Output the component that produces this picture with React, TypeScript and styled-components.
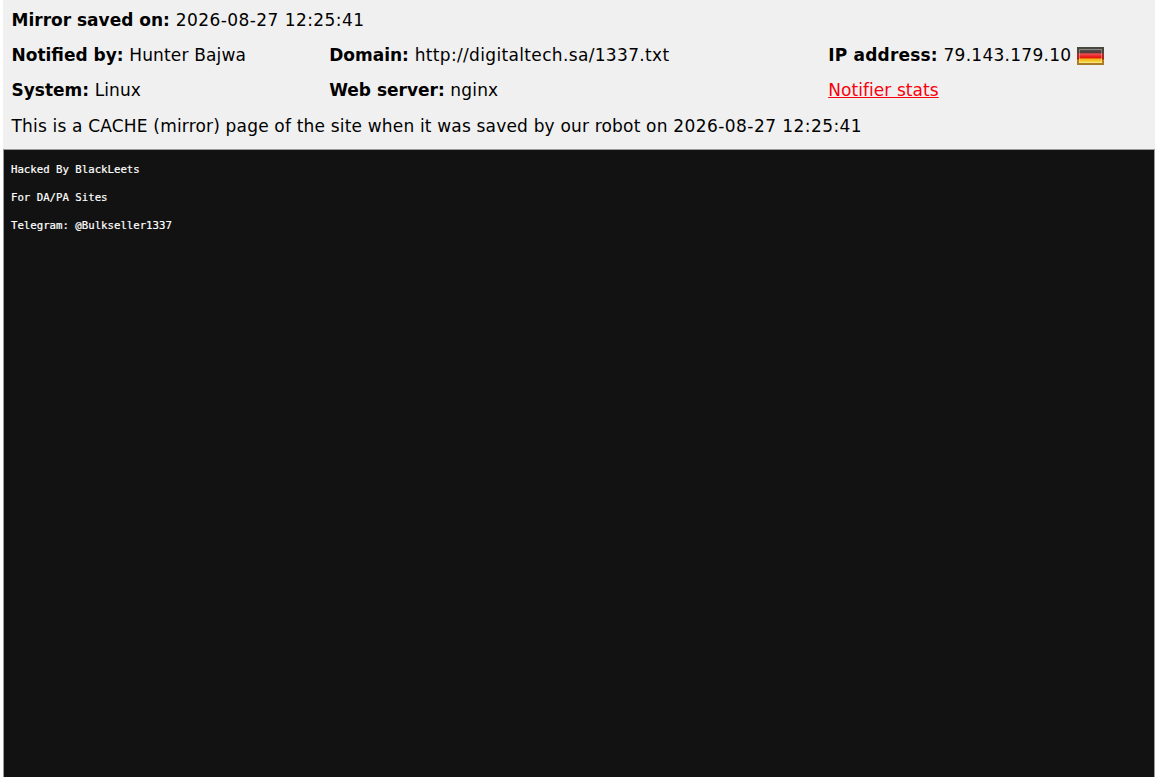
import { FC, ReactNode } from 'react';
import styled, { createGlobalStyle } from 'styled-components';

const GlobalStyle = createGlobalStyle`
body {
  margin: 0;
  background: #fff;
  overflow: hidden;
}
`;

const Page = styled.div`
box-sizing: border-box;
display: flex;
flex-direction: column;
height: 777px;
padding: 0 2px 0 3px;
`;

const Header = styled.header`
box-sizing: border-box;
flex: none;
height: 149px;
padding: 3px 8px 0 8.5px;
background: #f0f0f0;
color: #000;
font: 17px/35px Verdana, "DejaVu Sans", sans-serif;
white-space: nowrap;
`;

const Row = styled.div`
display: grid;
grid-template-columns: 317.7px 499px 1fr;
height: 35px;
`;

const Line = styled.div<{ $top?: number }>`
height: 35px;
padding-top: ${(p) => p.$top || 0}px;
`;

const Label = styled.strong<{ $spacing?: number }>`
font-weight: bold;
letter-spacing: ${(p) => p.$spacing || 0}px;
`;

const Value = styled.span<{ $spacing?: number }>`
letter-spacing: ${(p) => p.$spacing || 0}px;
`;

const StatsLink = styled.a`
color: #f8000c;
letter-spacing: 0.07px;
text-decoration: underline;
text-decoration-thickness: 1px;
text-underline-offset: 1px;
`;

const FlagIcon = styled.svg`
width: 27px;
height: 18px;
margin-left: 6px;
vertical-align: -4px;
`;

const Frame = styled.main`
box-sizing: border-box;
flex: 1;
padding: 13px 7px;
border: 1px solid #999;
border-bottom: 0;
background: #121212;
`;

const Deface = styled.pre`
margin: 0;
color: #fff;
font: 10.7px/14px "DejaVu Sans Mono", monospace;
-webkit-text-stroke: 0.2px #fff;
`;

type FieldProps = { label: string; labelSpacing?: number; spacing?: number; children: ReactNode };

const Field: FC<FieldProps> = ({ label, labelSpacing, spacing, children }) => (
  <div>
    <Label $spacing={labelSpacing}>{label}</Label>
    <Value $spacing={spacing}> {children}</Value>
  </div>
);

const GermanFlag = () => (
  <FlagIcon viewBox="0 0 27 18" role="img" aria-label="Germany">
    <defs>
      <linearGradient id="flag" x1="0" y1="0" x2="0" y2="1">
        <stop offset="0" stopColor="#5a5a58" />
        <stop offset=".24" stopColor="#4a3838" />
        <stop offset=".36" stopColor="#ee5050" />
        <stop offset=".6" stopColor="#e60f0f" />
        <stop offset=".74" stopColor="#f2b818" />
        <stop offset="1" stopColor="#f8e050" />
      </linearGradient>
      <linearGradient id="edge" x1="0" y1="0" x2="0" y2="1">
        <stop offset="0" stopColor="#48483e" />
        <stop offset=".3" stopColor="#51453c" />
        <stop offset=".4" stopColor="#a83030" />
        <stop offset=".64" stopColor="#b02018" />
        <stop offset=".74" stopColor="#b58020" />
        <stop offset="1" stopColor="#a37b28" />
      </linearGradient>
    </defs>
    <rect width="27" height="18" fill="url(#edge)" />
    <rect x="2" y="2" width="23" height="14" fill="url(#flag)" />
    <rect x="2.5" y="2.5" width="22" height="13" fill="none" stroke="#fff" strokeOpacity=".3" />
  </FlagIcon>
);

const App: FC = () => (
  <>
    <GlobalStyle />
    <Page>
      <Header>
        <Line><Field label="Mirror saved on:" spacing={0.43}>2026-08-27 12:25:41</Field></Line>
        <Row>
          <Field label="Notified by:" spacing={0.16}>Hunter Bajwa</Field>
          <Field label="Domain:" spacing={0.34}>http://digitaltech.sa/1337.txt</Field>
          <Field label="IP address:" labelSpacing={0.2} spacing={0.26}>79.143.179.10<GermanFlag /></Field>
        </Row>
        <Row>
          <Field label="System:" spacing={0.1}>Linux</Field>
          <Field label="Web server:" spacing={0.17}>nginx</Field>
          <div><StatsLink href="#">Notifier stats</StatsLink></div>
        </Row>
        <Line $top={1}>
          <Value $spacing={0.18}>This is a CACHE (mirror) page of the site when it was saved by our robot on </Value>
          <Value $spacing={0.44}>2026-08-27 12:25:41</Value>
        </Line>
      </Header>
      <Frame>
        <Deface>{'Hacked By BlackLeets\n\nFor DA/PA Sites\n\nTelegram: @Bulkseller1337'}</Deface>
      </Frame>
    </Page>
  </>
);

export default App;
